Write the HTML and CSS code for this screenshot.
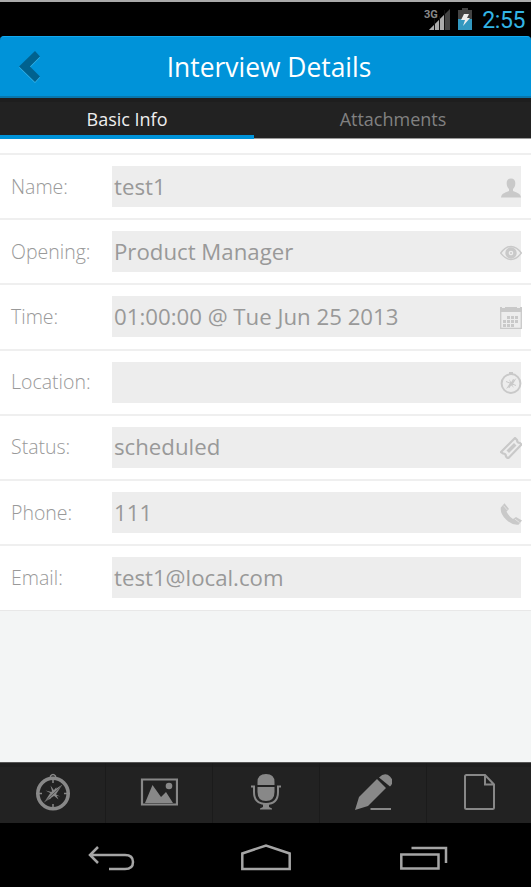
FILE: index.html
```html
<!DOCTYPE html>
<html lang="en">
<head>
<meta charset="utf-8">
<title>Interview Details</title>
<link rel="stylesheet" href="styles.css">
</head>
<body>
<svg class="defs" width="0" height="0" aria-hidden="true">
  <symbol id="compass" viewBox="0 0 36 38">
    <circle cx="18" cy="20.500" r="15.200" fill="none" stroke="currentColor" stroke-width="3.600"/>
    <path d="M15.500 4V3q2.500-3 5 0v1" fill="none" stroke="currentColor" stroke-width="1.300"/>
    <path d="M27.500 11.500L20.500 22 9 29.500 16 19z M15.500 12.500l4 5.500 4 8.500-5.500-4.500z M10.500 17.500l6 1.500 8.500 4.500-6-1.500z M21.500 14l-2.500 7-4.500 6 2-7z" fill="currentColor"/>
    <path d="M10 28.500L26.500 13" stroke="#222" stroke-width=".5"/>
    <path d="M18 7v3M18 31v3M4 20.500h3M29 20.500h3" stroke="currentColor" stroke-width="1.500"/>
  </symbol>
</svg>
<div class="screen">
  <div class="status">
    <svg class="signal" width="27" height="24" viewBox="0 0 27 24">
      <path d="M26 1v21H5z" fill="#444"/>
      <path d="M20 7v15H5z" fill="#aaa"/>
      <path d="M10.500 10v12M15.500 8v14M20.500 2v20" stroke="#111" stroke-width="1"/>
      <text x="0" y="10" class="network">3G</text>
    </svg>
    <svg class="battery" width="14" height="22" viewBox="0 0 14 22">
      <path d="M0 2h4V0h6v2h4v20H0z" fill="#444"/>
      <path d="M0 11h14v11H0z" fill="#3298c0"/>
      <path d="M6 6h5L9 10h3l-7 8 2-6H3z" fill="#eee"/>
    </svg>
    <span class="clock">2:55</span>
  </div>
  <header class="header">
    <svg class="back" width="24" height="34" viewBox="0 0 24 34">
      <path d="M1 17.500L17 2l5 5.500-10 10 10 10-5 5.500z" fill="#35b3e8"/>
      <path d="M1 16.500L17 1l5 5.500-10 10 10 10-5 5.500z" fill="#00628f"/>
    </svg>
    <h1>Interview Details</h1>
  </header>
  <nav class="tabs">
    <div class="tab active"><span>Basic Info</span></div>
    <div class="tab"><span>Attachments</span></div>
  </nav>
  <main class="form">
    <div class="row"><span class="label">Name:</span><div class="field"><span>test1</span>
      <svg class="icon" viewBox="0 0 22 22"><path d="M11 1.500c3 0 4.500 2 4.300 5 0 2.500-1 4.500-2.300 5.500v2c3 1.500 7.500 2 8 6.500H1c.5-4.500 5-5 8-6.500v-2C7.700 11 6.700 9 6.700 6.500c-.2-3 1.300-5 4.300-5z" fill="currentColor"/></svg></div></div>
    <div class="row"><span class="label">Opening:</span><div class="field"><span>Product Manager</span>
      <svg class="icon" viewBox="0 0 22 22"><path d="M.7 11Q5.500 4.500 11 4.500T21.300 11Q16.500 17.500 11 17.500T.7 11z" fill="none" stroke="currentColor" stroke-width="1.400"/><circle cx="11" cy="11" r="4" fill="none" stroke="currentColor" stroke-width="3.400"/><circle cx="11" cy="11" r="1" fill="currentColor"/></svg></div></div>
    <div class="row"><span class="label">Time:</span><div class="field"><span>01:00:00 @ Tue Jun 25 2013</span>
      <svg class="icon" viewBox="0 0 22 22"><path d="M.7 1v20.300h20.600V1" fill="none" stroke="currentColor" stroke-width="1.300"/><path d="M0 0h2v1h3V0h12v1h3V0h2v5H0z" fill="currentColor"/><path d="M7 10.500h12M3 14.500h16M3 18.500h12" stroke="currentColor" stroke-width="3" stroke-dasharray="3 1"/></svg></div></div>
    <div class="row"><span class="label">Location:</span><div class="field">
      <svg class="icon" viewBox="0 0 22 22"><circle cx="11" cy="11.500" r="9.400" fill="none" stroke="currentColor" stroke-width="2"/><path d="M9 0h4v2H9zM16.500 6l-4 7L6 17l4-6zM9 7l2 3 3 6-3-3z" fill="currentColor"/><path d="M6 9.500l10 4M13.500 7L9 16" stroke="currentColor"/></svg></div></div>
    <div class="row"><span class="label">Status:</span><div class="field"><span>scheduled</span>
      <svg class="icon" viewBox="0 0 22 22"><path d="M1 15L15 1l2 2q0 3 3 3l1.500 1.500L8 21.500 6 19.500q0-3-3-3z" fill="none" stroke="currentColor" stroke-width="2.200"/><path d="M6.500 13.500L14 6l2.500 2.500L9 16z" fill="currentColor"/></svg></div></div>
    <div class="row"><span class="label">Phone:</span><div class="field"><span>111</span>
      <svg class="icon" viewBox="0 0 22 22"><path d="M.8 4.500L4.500.3 9 6 6.500 8.500q2 4.500 6.500 7.500l3-2 6 3.500-3.500 4.200Q12 22.500 6 16.500T.8 4.500z" fill="currentColor"/><path d="M3.500 2.700l4 4.500M14.800 16l4.700 3.500" stroke="#ededed" stroke-width=".7"/></svg></div></div>
    <div class="row"><span class="label">Email:</span><div class="field"><span>test1@local.com</span></div></div>
  </main>
  <div class="space"></div>
  <div class="toolbar">
    <div class="tool"><svg width="36" height="38"><use href="#compass"/></svg></div>
    <div class="tool"><svg width="38" height="38" viewBox="0 0 38 38"><path d="M2 6.500h35v25H2z" fill="none" stroke="currentColor" stroke-width="2.200"/><path d="M5 30l7.500-18L21 24l5-5 7 11z" fill="currentColor"/><circle cx="29" cy="13" r="3.300" fill="currentColor"/></svg></div>
    <div class="tool"><svg width="34" height="38" viewBox="0 0 34 38"><path d="M8.500 12V9q0-8 8.500-8t8.500 8v3zM8.500 14h17v5q0 9-8.500 9t-8.500-9z" fill="currentColor"/><path d="M2 13.500h3V19q0 12 12 12t12-12v-5.500h3" fill="none" stroke="currentColor" stroke-width="2"/><path d="M14 31h6v3l3 1.500v1H11v-1l3-1.500z" fill="currentColor"/></svg></div>
    <div class="tool"><svg width="38" height="38" viewBox="0 0 38 38"><path d="M1 37l4-13L23 6l9 9-18 18zM25 4.500q6-6 11-1t0 10z" fill="currentColor"/><path d="M16.500 36H37" stroke="currentColor" stroke-width="2"/></svg></div>
    <div class="tool"><svg width="34" height="38" viewBox="0 0 34 38"><path d="M4.500 2H23l9 9.500v23q0 1.500-1.500 1.500h-26Q3 36 3 34.500v-31Q3 2 4.500 2zM23 2v9.500h9" fill="none" stroke="currentColor" stroke-width="2"/></svg></div>
  </div>
  <div class="system">
    <svg width="48" height="30" viewBox="0 0 48 30"><path d="M11 4L3 12l8 8M3 12h35q8 0 8 7t-8 7H22" fill="none" stroke="currentColor" stroke-width="2.500"/></svg>
    <svg class="home" width="52" height="30" viewBox="0 0 52 30"><path d="M2.300 26V10.500L26 2.500l23.700 8V26z" fill="none" stroke="currentColor" stroke-width="2.500"/></svg>
    <svg width="48" height="30" viewBox="0 0 48 30"><path d="M1.300 11.500h37.200v14H1.300zM11.500 5H46v15" fill="none" stroke="currentColor" stroke-width="2.500"/></svg>
  </div>
</div>
</body>
</html>
```
FILE: styles.css
```css
* { box-sizing: border-box; }
body { margin: 0; background: #000; font-family: "Open Sans", sans-serif; }
svg { display: block; flex: none; }
.defs { position: absolute; }
.screen { width: 531px; height: 887px; display: flex; flex-direction: column; overflow: hidden; }
.status { height: 36px; flex: none; border-top: 2px solid #aaa; display: flex; justify-content: flex-end; align-items: flex-start; padding: 6px 6px 0 0; background: #000; }
.network { font: 700 11px Roboto, sans-serif; fill: #888; }
.battery { margin: 0 10px 0 7px; }
.clock { font: 400 23px/25px Roboto, sans-serif; color: #33b5e5; letter-spacing: -.4px; }
.header { height: 62px; flex: none; display: grid; grid-template-columns: 48px 1fr 41px; align-items: center; background: #0093d9; border-top: 1px solid #12a9f0; border-bottom: 2px solid #0877ad; border-radius: 4px 4px 0 0; }
.back { margin-left: 18px; }
h1 { margin: 0; color: #fff; font-size: 26.400px; line-height: 36px; font-weight: 400; text-align: center; white-space: nowrap; }
.tabs { height: 41px; flex: none; display: grid; grid-template: 41px / 254px 277px; background: #222; box-shadow: inset 0 4px #1e1e1e; }
.tab { color: #818181; font-size: 18px; line-height: 42px; text-align: center; border-bottom: 1px solid #999; }
.tab + .tab { padding-left: 1px; }
.tab.active { color: #eee; border-bottom: 4px solid #0093d9; }
.form { flex: none; background: #fff; padding-top: 14px; }
.row { height: 65.200px; display: flex; align-items: center; padding: 0 10px 0 11px; border-top: 2px solid #efefef; }
.row:last-child { height: 66.400px; border-bottom: 1px solid #e8e8e8; }
.label { width: 101px; flex: none; font-size: 19.500px; line-height: 40px; font-weight: 300; color: #999; }
.field { height: 41px; flex: 1; display: flex; align-items: center; padding-left: 2px; background: #ededed; color: #999; font-size: 22.230px; line-height: 40px; white-space: nowrap; }
.icon { width: 22px; height: 22px; margin: 2px -1px 0 auto; color: #c9c9c9; }
.space { flex: 1; background: #f3f5f5; }
.toolbar { height: 61px; flex: none; display: grid; grid-template-columns: 106px 107px 107px 107px 104px; background: #222; border-top: 1px solid #555; box-shadow: inset 0 4px #1e1e1e; color: #888; }
.tool { display: flex; justify-content: center; padding-top: 10px; border-right: 1px solid #1b1b1b; }
.tool:last-child { border: 0; padding-right: 1px; }
.system { height: 64px; flex: none; display: flex; justify-content: space-between; padding: 20px 83px 0 87px; background: #000; color: #a5a5a5; }
.home { margin-right: 3px; }
```
